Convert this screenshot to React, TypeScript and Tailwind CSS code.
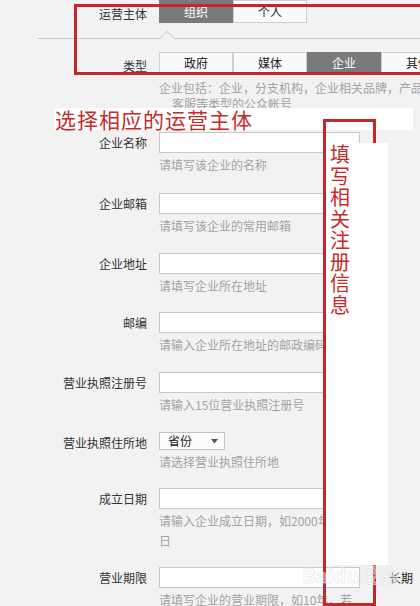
import React from "react";

function Btn({ active, children }: { active?: boolean; children: React.ReactNode }) {
  return (
    <div
      className={
        active
          ? "w-[74px] shrink-0 h-full flex items-center justify-center bg-[#7a7a7a] text-white border border-[#7a7a7a]"
          : "w-[74px] shrink-0 h-full flex items-center justify-center bg-[#fafafa] text-[#222] border border-[#cfcfcf]"
      }
    >
      {children}
    </div>
  );
}

function Row({
  label,
  hint,
  className,
  extra,
}: {
  label: string;
  hint: React.ReactNode;
  className: string;
  extra?: React.ReactNode;
}) {
  return (
    <div className={"flex " + className}>
      <div className="w-[147px] shrink-0 text-right leading-[21px] text-[#333]">{label}</div>
      <div className="ml-[12px] shrink-0">
        <div className="flex items-center">
          <div className="w-[201px] h-[21px] border border-[#c8c8c8] bg-white" />
          {extra}
        </div>
        <div className="mt-[2px] leading-[20px] text-[#a3a3a3] whitespace-nowrap">{hint}</div>
      </div>
    </div>
  );
}

export default function App() {
  const vtext = "填写相关注册信息".split("");
  return (
    <div className="relative w-[420px] h-[606px] overflow-hidden bg-[#f2f2f2] text-[12px] font-['Noto_Sans_CJK_SC','Liberation_Sans',sans-serif]">
      {/* 运营主体 */}
      <div className="flex items-center h-[23px]">
        <div className="w-[147px] shrink-0 text-right text-[#333] leading-[23px] pt-[4px]">运营主体</div>
        <div className="ml-[12px] flex h-[23px] shrink-0">
          <Btn active>组织</Btn>
          <Btn>个人</Btn>
        </div>
      </div>

      {/* separator */}
      <div className="relative mt-[15px] ml-[38px] h-px bg-[#c6c6c6]">
        <svg className="absolute left-[121px] top-[-7px]" width="16" height="9" viewBox="0 0 16 9">
          <polygon points="0.5,7.5 8,0.5 15.5,7.5 15.5,8 0.5,8" fill="#f2f2f2" />
          <polyline points="0.5,7.5 8,0.5 15.5,7.5" fill="none" stroke="#c6c6c6" strokeWidth="1" />
        </svg>
      </div>

      {/* 类型 */}
      <div className="mt-[13px] flex items-center h-[22px]">
        <div className="w-[147px] shrink-0 text-right text-[#333] leading-[22px] pt-[6px]">类型</div>
        <div className="ml-[12px] flex h-[22px] shrink-0">
          <Btn>政府</Btn>
          <Btn>媒体</Btn>
          <Btn active>企业</Btn>
          <Btn>其他</Btn>
        </div>
      </div>

      <div className="mt-[5px] pl-[159px] leading-[18px] text-[#a3a3a3] whitespace-nowrap">
        企业包括：企业，分支机构，企业相关品牌，产品
      </div>
      <div className="pl-[172px] leading-[14px] text-[#a3a3a3] whitespace-nowrap">客服等类型的公众帐号</div>

      <Row className="mt-[21px]" label="企业名称" hint="请填写该企业的名称" />
      <Row className="mt-[18px]" label="企业邮箱" hint="请填写该企业的常用邮箱" />
      <Row className="mt-[17px]" label="企业地址" hint="请填写企业所在地址" />
      <Row className="mt-[16px]" label="邮编" hint="请输入企业所在地址的邮政编码" />
      <Row className="mt-[17px]" label="营业执照注册号" hint="请输入15位营业执照注册号" />

      {/* select row */}
      <div className="flex mt-[17px]">
        <div className="w-[147px] shrink-0 text-right leading-[21px] text-[#333]">营业执照住所地</div>
        <div className="ml-[12px] shrink-0">
          <div className="w-[66px] h-[18px] border border-[#c4c4c4] bg-[#fbfbfb] flex items-center justify-between pl-[8px] pr-[6px] text-[#222]">
            <span className="leading-[16px]">省份</span>
            <svg width="7" height="5" viewBox="0 0 7 5">
              <polygon points="0,0 7,0 3.5,4.5" fill="#555" />
            </svg>
          </div>
          <div className="mt-[2px] leading-[20px] text-[#a3a3a3] whitespace-nowrap">请选择营业执照住所地</div>
        </div>
      </div>

      <Row
        className="mt-[16px]"
        label="成立日期"
        hint={
          <>
            请输入企业成立日期，如2000年1月1
            <br />
            日
          </>
        }
      />
      <Row
        className="mt-[16px]"
        label="营业期限"
        hint="请填写企业的营业期限，如10年，若"
        extra={<span className="ml-[29px] text-[#222] leading-[21px]">长期</span>}
      />

      {/* annotation overlays */}
      <div className="absolute left-[74px] top-[4px] w-[360px] h-[71px] border-[3px] border-[#c1272d]" />
      <div className="absolute left-[54px] top-[108px] w-[359px] h-[22px] bg-white">
        <div className="pl-[1px] text-[21px] leading-[22px] tracking-[1px] text-[#c62a2a] whitespace-nowrap">
          选择相应的运营主体
        </div>
      </div>
      <div className="absolute left-[323px] top-[119px] w-[53px] h-[487px] border-[3px] border-[#c1272d]" />
      <div className="absolute left-[326px] top-[143px] w-[62px] h-[422px] bg-white">
        <div className="flex flex-col pl-[4px] text-[20px] leading-[21.5px] text-[#c62a2a]">
          {vtext.map((c, i) => (
            <span key={i}>{c}</span>
          ))}
        </div>
      </div>
      <div className="absolute left-[302px] top-[562px] text-[20px] font-bold leading-[26px] text-white/40 [-webkit-text-stroke:0.5px_#e2e2e2] whitespace-nowrap">
        Baidu经验
      </div>
    </div>
  );
}
